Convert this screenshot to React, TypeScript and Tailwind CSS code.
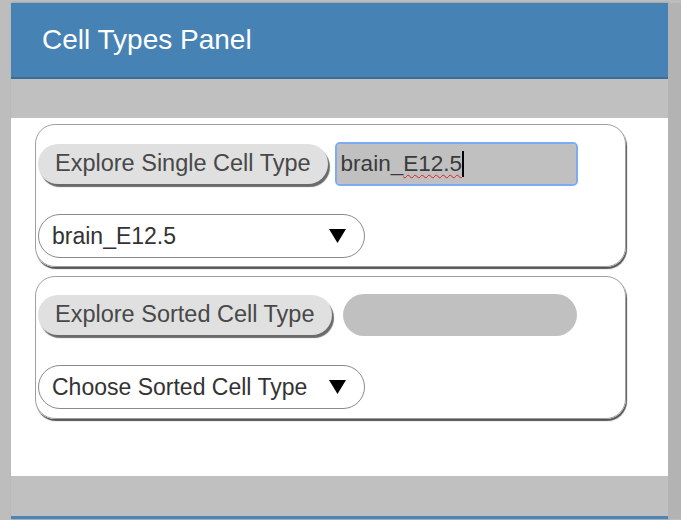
import React from 'react';

const font = { fontFamily: '"Liberation Sans", Arial, sans-serif' };

function Arrow() {
  return (
    <svg width="17" height="14" viewBox="0 0 17 14" className="shrink-0">
      <polygon points="0,0 17,0 8.5,14" fill="#000" />
    </svg>
  );
}

function PillButton({ label }: { label: string }) {
  return (
    <button
      type="button"
      className="h-[40px] px-[17px] rounded-full bg-[#e0e0e0] text-[23.5px] leading-none text-[#484848] shadow-[2px_3px_1px_#6a6a6a] whitespace-nowrap"
    >
      {label}
    </button>
  );
}

function FakeSelect({ value }: { value: string }) {
  return (
    <div className="flex items-center justify-between w-[327px] h-[44px] rounded-full border border-[#8a8a8a] bg-white pl-[13px] pr-[18px] text-[23px] text-[#333]">
      <span className="whitespace-nowrap">{value}</span>
      <Arrow />
    </div>
  );
}

export default function App() {
  return (
    <div className="min-h-[520px] bg-[#bdbdbd] pt-[3px] pl-[11px]" style={font}>
      <div className="flex">
        <div className="w-[657px] shadow-[1px_0_2px_#888]">
          {/* Header */}
          <div className="h-[76px] bg-[#4682b4] border-b-2 border-[#3b6d96] flex items-center pl-[31px]">
            <h1 className="text-[28px] text-white leading-none">Cell Types Panel</h1>
          </div>

          <div className="h-[39px] bg-[#c0c0c0]" />

          {/* Content */}
          <div className="h-[358px] bg-white pt-[6px] pl-[24px]">
            <div className="w-[591px] h-[143px] rounded-[20px] border border-[#a0a0a0] shadow-[1px_2px_1px_#555] pt-[19px] pl-[2px]">
              <div className="flex items-center">
                <PillButton label="Explore Single Cell Type" />
                <div className="ml-[9px] w-[239px] h-[40px] rounded-[3px] bg-[#c0c0c0] outline-2 outline-[#7eaaf4] pl-[4px] flex items-center text-[22.5px] text-[#3a3a3a]">
                  <span>brain_</span>
                  <span className="underline decoration-wavy decoration-[#e02020] decoration-1 underline-offset-[3px]">E12.5</span>
                  <span className="inline-block w-[2px] h-[26px] bg-black" />
                </div>
              </div>
              <div className="mt-[30px]">
                <FakeSelect value="brain_E12.5" />
              </div>
            </div>

            <div className="mt-[9px] w-[591px] h-[143px] rounded-[20px] border border-[#a0a0a0] shadow-[1px_2px_1px_#555] pt-[17px] pl-[2px]">
              <div className="flex items-center">
                <PillButton label="Explore Sorted Cell Type" />
                <div className="ml-[11px] w-[234px] h-[42px] rounded-full bg-[#c0c0c0]" />
              </div>
              <div className="mt-[29px]">
                <FakeSelect value="Choose Sorted Cell Type" />
              </div>
            </div>
          </div>

          <div className="h-[40px] bg-[#c0c0c0]" />
          <div className="h-[3px] bg-[#4a86b8]" />
        </div>
        <div className="flex-1 bg-[#b3b3b3]" />
      </div>
    </div>
  );
}
